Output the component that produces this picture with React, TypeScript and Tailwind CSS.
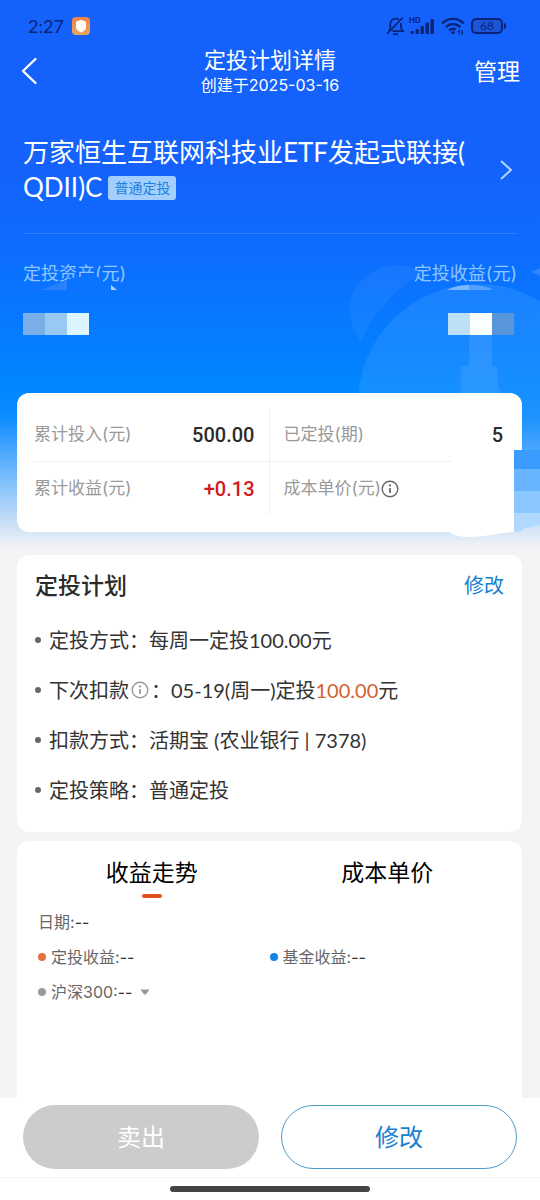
import { useState } from 'react';

const planItems = [
  { label: '定投方式', value: '每周一定投100.00元' },
  { label: '下次扣款', value: '05-19(周一)定投', amount: '100.00', suffix: '元', hasInfo: true },
  { label: '扣款方式', value: '活期宝 (农业银行 | 7378)' },
  { label: '定投策略', value: '普通定投' },
];

const tabs = ['收益走势', '成本单价'];

function InfoIcon({ className }: { className: string }) {
  return (
    <svg viewBox="0 0 18 18" className={className} fill="none" stroke="currentColor" aria-hidden="true">
      <circle cx="9" cy="9" r="7.8" strokeWidth="1.4" />
      <path d="M9 8v5" strokeWidth="1.7" />
      <circle cx="9" cy="5.4" r="1.1" fill="currentColor" stroke="none" />
    </svg>
  );
}

function StatusBar() {
  return (
    <div className="flex h-[46px] items-center justify-between pt-1.5 pr-[34px] pl-7 text-[#0b2477]">
      <div className="flex items-center gap-2">
        <span className="text-[18px] leading-6">2:27</span>
        <svg viewBox="0 0 18 18" className="size-[18px]" aria-hidden="true">
          <defs>
            <linearGradient id="shield" x1="0" y1="0" x2="0" y2="1">
              <stop offset="0" stopColor="#f0814d" />
              <stop offset="1" stopColor="#eaa55c" />
            </linearGradient>
          </defs>
          <rect width="18" height="18" rx="4" fill="url(#shield)" />
          <path d="M9 2.8l5 2v5.4c0 2.4-2.400 4.200-5 5.300-2.600-1.100-5-2.900-5-5.300V4.800z" fill="#fffdf5" />
        </svg>
      </div>
      <div className="flex items-center">
        <svg viewBox="0 0 19 20" className="h-5 w-[19px]" fill="none" stroke="currentColor" strokeWidth="1.8" aria-hidden="true">
          <path d="M4.300 12.500V8a5.400 5.400 0 0 1 8.600-4.300M15 7v5l2 3.200H6.500M4.300 12.500L2.800 15.200" />
          <path d="M1.200 17.800L16.800 1.500" />
          <path d="M7 18.200h5" />
        </svg>
        <div className="relative ml-1 h-5 w-[26px]">
          <span className="absolute top-0 left-0 font-['Inter'] text-[8px] leading-[8px] font-bold">HD</span>
          <svg viewBox="0 0 26 20" className="h-5 w-[26px]" fill="currentColor" aria-hidden="true">
            <rect x="1.500" y="15" width="3.400" height="3" rx="1" />
            <rect x="6.500" y="13" width="3.400" height="5" rx="1" />
            <rect x="11.500" y="10" width="3.400" height="8" rx="1" />
            <rect x="16.500" y="6.500" width="3.400" height="11.500" rx="1" />
            <rect x="21.500" y="3" width="3.400" height="15" rx="1" />
          </svg>
        </div>
        <svg viewBox="0 0 24 20" className="ml-1.5 h-5 w-6" fill="none" stroke="currentColor" strokeWidth="2.4" aria-hidden="true">
          <path d="M1.200 7.500a15 15 0 0 1 21.600 0" />
          <path d="M4.800 11.200a10 10 0 0 1 14.400 0" />
          <path d="M8.300 14.600a5.300 5.300 0 0 1 6.600-.8" />
          <circle cx="12" cy="16.600" r="1.700" fill="currentColor" stroke="none" />
          <path d="M18.300 18.500v-4l-1.300 1.500M21 14v4l1.300-1.500" strokeWidth="1.200" />
        </svg>
        <div className="ml-1.5 flex items-center">
          <span className="flex h-4 w-8 items-center justify-center rounded-[5px] border-2 border-current bg-[#1a55d8] text-[12px] leading-3">
            68
          </span>
          <span className="ml-px h-1.5 w-0.5 rounded-r bg-current" />
        </div>
      </div>
    </div>
  );
}

function HeroArt() {
  return (
    <svg viewBox="0 0 200 281" className="absolute top-[250px] right-0 h-[281px] w-[200px]" aria-hidden="true">
      <path d="M21 92C6 70 6 46 20 32 36 14 62 10 84 22 60 36 34 60 21 92z" fill="#ffffff" fillOpacity=".05" />
      <circle cx="138" cy="154" r="120" fill="#4aa6ff" fillOpacity=".28" />
      <path d="M191 22l9-4v8z" fill="#ffffff" fillOpacity=".15" />
      <path d="M129 85h23v31h5l1 22 4 6h-41V116h8z" fill="#5ea8ff" fillOpacity=".3" />
      {/* blocks beside the summary card */}
      <rect x="174" y="200" width="26" height="19" fill="#3a9cff" />
      <rect x="174" y="219" width="26" height="22" fill="#68b4ff" />
      <rect x="174" y="241" width="26" height="22" fill="#8ac8ff" />
      <path d="M174 263h26v12l-26 6z" fill="#b1d9ff" />
    </svg>
  );
}

function Assets() {
  return (
    <div className="mt-7 flex justify-between font-['Inter','Noto_Sans_CJK_SC',sans-serif] text-[18px] leading-6 text-[#8fc6ff]">
      <div>
        <div className="relative">
          定投资产(元)
          <svg viewBox="0 0 104 32" className="absolute top-0 left-0 h-8 w-[104px]" aria-hidden="true">
            <path d="M38 20l14-5h28v15H38z" fill="#0a73ff" />
            <path d="M18 28l26-10v10z" fill="#2a82fb" />
            <path d="M88 23l6 5h-6z" fill="#a8d8ff" />
          </svg>
        </div>
        <div className="mt-[27px] flex">
          <span className="size-[22px] bg-[#7aaee8]" />
          <span className="size-[22px] bg-[#99c8f4]" />
          <span className="size-[22px] bg-[#dcf4ff]" />
        </div>
      </div>
      <div>
        <div className="relative">
          定投收益(元)
          <svg viewBox="0 0 46 6" className="absolute top-[23px] left-[33px] h-1.5 w-[46px]" aria-hidden="true">
            <path d="M0 5Q10 0 22 0v5z" fill="#7db9ff" />
            <path d="M22 0q14 0 23 4v1H22z" fill="#55a2ff" />
          </svg>
        </div>
        <div className="mt-[27px] flex justify-end pr-[3px]">
          <span className="size-[22px] bg-[#bce0f6]" />
          <span className="size-[22px] bg-[#fafffe]" />
          <span className="size-[22px] bg-[#5896d9]" />
        </div>
      </div>
    </div>
  );
}

function Summary() {
  return (
    <section className="relative mt-[58px] mr-[18px] ml-[17px] rounded-xl bg-white px-[17px] pt-4 pb-[17px]">
      <dl className="grid grid-cols-2 font-['Inter','Noto_Sans_CJK_SC',sans-serif] text-[17px] text-[#999999]">
        <div className="flex h-[53px] items-center justify-between border-r border-b border-[#f0f0f0] pr-3.5">
          <dt>累计投入(元)</dt>
          <dd className="font-['Roboto'] text-[20px] font-medium text-[#2b2b2b]">500.00</dd>
        </div>
        <div className="flex h-[53px] items-center justify-between border-b border-[#f0f0f0] pr-0.5 pl-3.5">
          <dt>已定投(期)</dt>
          <dd className="font-['Roboto'] text-[20px] font-medium text-[#2b2b2b]">5</dd>
        </div>
        <div className="flex h-[53px] items-center justify-between border-r border-[#f0f0f0] pr-3.5">
          <dt>累计收益(元)</dt>
          <dd className="font-['Roboto'] text-[20px] font-medium text-[#d0191d]">+0.13</dd>
        </div>
        <div className="flex h-[53px] items-center pl-3.5">
          <dt>成本单价(元)</dt>
          <dd className="flex">
            <button aria-label="成本单价说明" className="text-[#666666]">
              <InfoIcon className="size-[18px]" />
            </button>
          </dd>
        </div>
      </dl>
      <svg viewBox="0 0 72 87" className="absolute top-[57px] right-0 h-[87px] w-[72px]" aria-hidden="true">
        <path d="M2 8h62v74c-14 1-28 5-42 5-12 0-18-1-22-5z" fill="#ffffff" />
        <path d="M64 0h8v19h-8z" fill="#3a9cff" />
        <path d="M64 19h8v22h-8z" fill="#68b4ff" />
        <path d="M64 41h8v22h-8z" fill="#8ac8ff" />
        <path d="M64 63h8v18l-8 1z" fill="#b1d9ff" />
      </svg>
    </section>
  );
}

function PlanCard() {
  return (
    <section className="mr-[18px] ml-[17px] rounded-xl bg-white px-[18px] pt-2.5 pb-[17px]">
      <div className="flex h-10 items-center justify-between">
        <h2 className="text-[23px] font-medium text-[#2b2b2b]">定投计划</h2>
        <button className="text-[20px] text-[#1482d2]">修改</button>
      </div>
      <ul className="mt-2.5 text-[20px] leading-[50px] text-[#333333]">
        {planItems.map((item) => (
          <li key={item.label} className="flex items-center">
            <span className="mr-2 size-1.5 rounded-full bg-[#666666]" />
            {item.label}
            {item.hasInfo && (
              <button aria-label="下次扣款说明" className="mx-0.5 text-[#999999]">
                <InfoIcon className="size-[18px]" />
              </button>
            )}
            ：{item.value}
            {item.amount && <span className="text-[#d2622f]">{item.amount}</span>}
            {item.suffix}
          </li>
        ))}
      </ul>
    </section>
  );
}

function TrendCard() {
  const [active, setActive] = useState(0);

  return (
    <section className="mt-[9px] mr-[18px] ml-[17px] flex-1 rounded-t-xl bg-white pt-3">
      <div role="tablist" className="grid grid-cols-2 px-[17px]">
        {tabs.map((tab, index) => (
          <button
            key={tab}
            role="tab"
            aria-selected={active === index}
            onClick={() => setActive(index)}
            className="flex flex-col items-center text-[23px] leading-[38px] text-black"
          >
            {tab}
            {active === index && <span className="mt-[3px] h-1 w-5 rounded-sm bg-[#e0501a]" />}
          </button>
        ))}
      </div>
      <div className="mt-3 grid grid-cols-2 gap-y-[11px] px-[21px] font-['Inter','Noto_Sans_CJK_SC',sans-serif] text-[16px] leading-6 text-[#666666]">
        <div className="col-span-2">
          日期:<span className="text-[#333333]">--</span>
        </div>
        <div className="flex items-center">
          <span className="mr-[5px] size-2 rounded-full bg-[#e87040]" />
          定投收益:<span className="text-[#333333]">--</span>
        </div>
        <div className="flex items-center">
          <span className="mr-[5px] size-2 rounded-full bg-[#1482e6]" />
          基金收益:<span className="text-[#333333]">--</span>
        </div>
        <button className="flex items-center">
          <span className="mr-[5px] size-2 rounded-full bg-[#999999]" />
          沪深300:<span className="text-[#333333]">--</span>
          <svg viewBox="0 0 10 6" className="ml-2 h-1.5 w-2.5" fill="#999999" aria-hidden="true">
            <path d="M.5.5h9L6 5.200q-1 .8-2 0z" />
          </svg>
        </button>
      </div>
    </section>
  );
}

export default function App() {
  return (
    <div className="flex min-h-screen flex-col bg-[#f4f4f4] font-['Lato','Noto_Sans_CJK_SC',sans-serif]">
      <div className="relative bg-[linear-gradient(180deg,#1462fb_0%,#1462fb_30%,#0d6dff_46%,#0087ff_70%,#0c8cff_75%,#8cc5fb_88%,#cfe3f6_95%,#f4f4f4_99%)] pb-[23px]">
        <HeroArt />
        <div className="relative">
          <StatusBar />
          <header className="flex h-[50px] items-center justify-between px-5 text-white">
            <button aria-label="返回" className="w-[46px]">
              <svg viewBox="0 0 18 28" className="h-7 w-[18px]" fill="none" stroke="currentColor" strokeWidth="2.400" strokeLinecap="round" strokeLinejoin="round" aria-hidden="true">
                <path d="M15.500 2L3 14l12.500 12" />
              </svg>
            </button>
            <div className="pt-0.5 text-center">
              <h1 className="text-[22px] leading-[26px]">定投计划详情</h1>
              <p className="font-['Inter','Noto_Sans_CJK_SC',sans-serif] text-[16px] leading-6">创建于2025-03-16</p>
            </div>
            <button className="text-[23px]">管理</button>
          </header>
          <div className="mt-[39px] px-[23px]">
            <a href="#fund" className="flex items-center justify-between text-[26px] leading-[35px] text-white">
              <span>
                万家恒生互联网科技业ETF发起式联接(
                <br />
                <span className="flex items-center gap-1.5">
                  QDII)C
                  <span className="flex h-6 items-center rounded-[3px] bg-[#a3cfff] px-1.5 text-[14px] leading-6 text-[#2080dc]">
                    普通定投
                  </span>
                </span>
              </span>
              <svg viewBox="0 0 14 20" className="mr-1 h-5 w-3.5 shrink-0" fill="none" stroke="#b4d4ff" strokeWidth="2" aria-hidden="true">
                <path d="M2 1l10 9-10 9" />
              </svg>
            </a>
            <div className="mt-7 border-t border-[#3580ff]" />
            <Assets />
          </div>
          <Summary />
        </div>
      </div>
      <PlanCard />
      <TrendCard />
      <footer className="bg-white pt-[7px]">
        <div className="grid grid-cols-2 gap-[22px] px-[23px] text-[24px]">
          <button className="h-16 rounded-full bg-[#cccccc] text-white">卖出</button>
          <button className="h-16 rounded-full border border-[#4d9cc8] text-[#1a80cf]">修改</button>
        </div>
        <div className="mt-2 flex h-[23px] items-center justify-center border-t border-[#f6f6f6]">
          <div className="h-1.5 w-[200px] rounded-full bg-[#444444]" />
        </div>
      </footer>
    </div>
  );
}
